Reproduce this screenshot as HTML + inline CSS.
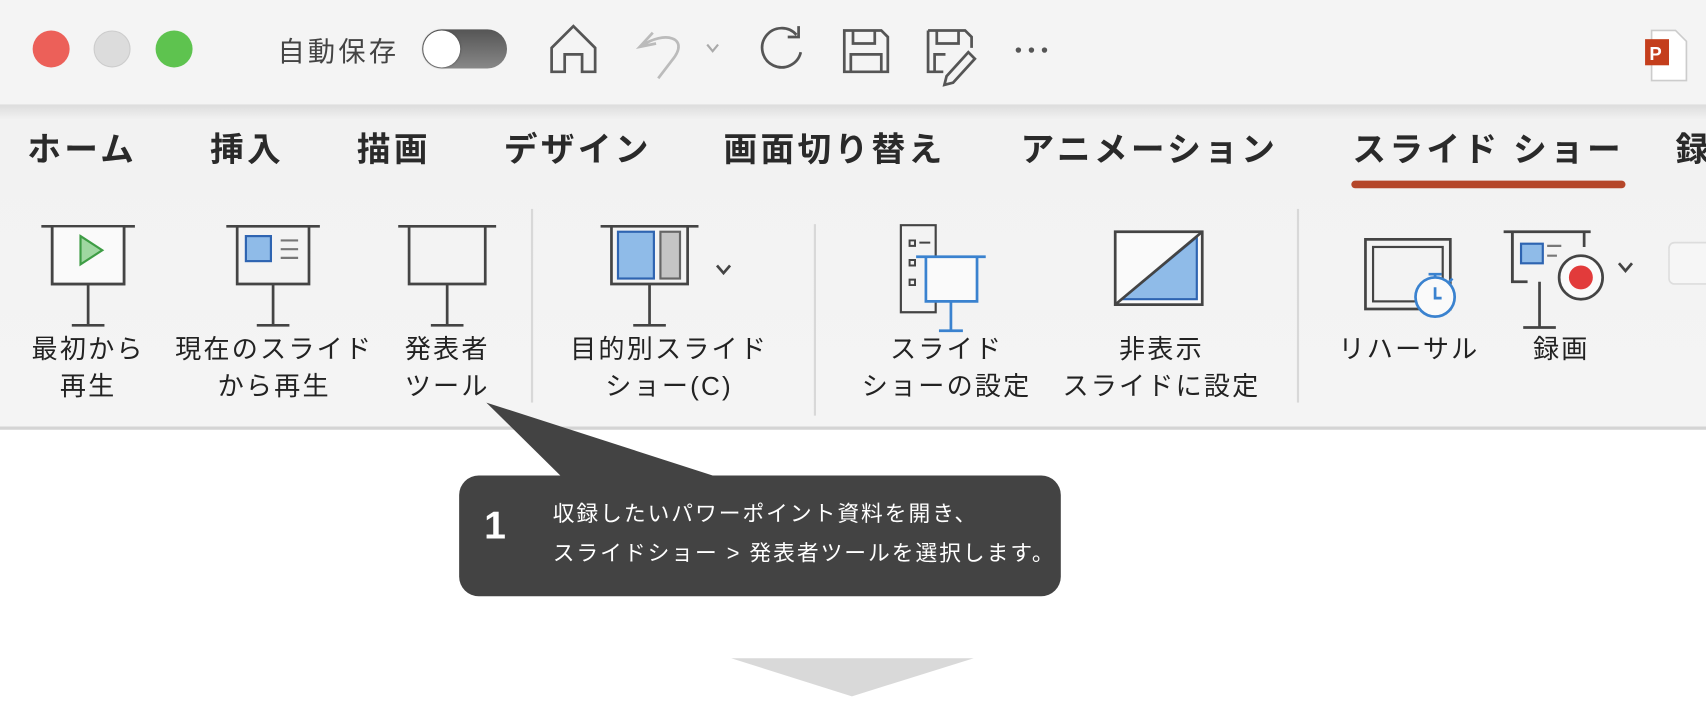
<!DOCTYPE html>
<html><head><meta charset="utf-8"><style>
html,body{margin:0;padding:0;background:#fff;overflow:hidden;width:1706px;height:724px}
#s{position:absolute;left:0;top:0;width:1568px;height:666px;transform:scale(1.08801);transform-origin:0 0;font-family:"Liberation Sans","Noto Sans CJK JP",sans-serif;color:#222}
.a{position:absolute}
.tab{position:absolute;top:112px;font-size:31px;letter-spacing:3px;font-weight:bold;color:#2a2a2a;white-space:nowrap}
.lbl{position:absolute;top:305px;font-size:24px;letter-spacing:2px;line-height:34px;text-align:center;color:#222;white-space:nowrap}
.sep{position:absolute;width:2px;background:#d8d8d8}
</style></head><body><div id="s">
<div class="a" style="left:0;top:0;width:1568px;height:96px;background:#f4f4f4"></div>
<div class="a" style="left:0;top:96px;width:1568px;height:296px;background:linear-gradient(#dcdcdc,#f2f2f2 14px,#f4f4f4)"></div>
<div class="a" style="left:0;top:392px;width:1568px;height:3px;background:#d4d4d4"></div>
<div class="a" style="left:30px;top:28px;width:34px;height:34px;border-radius:50%;background:#ec6059"></div>
<div class="a" style="left:86px;top:28px;width:34px;height:34px;border-radius:50%;background:#dcdcdc;box-sizing:border-box;border:1px solid #ccc"></div>
<div class="a" style="left:143px;top:28px;width:34px;height:34px;border-radius:50%;background:#5ec34f"></div>
<div class="a" style="left:255px;top:28px;font-size:25px;letter-spacing:3px;color:#444">自動保存</div>
<div class="a" style="left:388px;top:27px;width:78px;height:36px;border-radius:18px;background:linear-gradient(#555,#888)"></div>
<div class="a" style="left:389px;top:28px;width:34px;height:34px;border-radius:50%;background:#fff;box-shadow:0 0 2px #444"></div>
<svg class="a" style="left:0;top:0" width="1568" height="96" fill="none" stroke="#555" stroke-width="2.5">
<path d="M507 66V44L527 24L547 44V66H535V50H519V66Z"/>
<path d="M600 30L588 43L603 40M590 42C610 28 635 34 618 55L605 72" stroke="#bbb"/>
<path d="M650 41l5 6l5-6" stroke="#aaa" stroke-width="2"/>
<path d="M732 32A18 18 0 1 0 736 48M734 24v10h-10"/>
<path d="M776 28h34l6 6v32h-40zM784 28v12h20v-12M782 66v-16h28v16"/>
<path d="M853 28h34l6 6v10M853 28v38h14M861 28v12h20v-12M859 66v-16h10M870 70l20-22l6 6l-20 22l-8 2z"/>
<circle cx="936" cy="46" r="2.5" fill="#555" stroke="none"/><circle cx="948" cy="46" r="2.5" fill="#555" stroke="none"/><circle cx="960" cy="46" r="2.5" fill="#555" stroke="none"/>
<path d="M1518 28h22l10 10v36h-32z" fill="#fff" stroke="#ccc" stroke-width="1.5"/>
<rect x="1512" y="36" width="22" height="24" fill="#c43e1c" stroke="none"/>
<text x="1516" y="55" fill="#fff" stroke="none" font-size="17" font-weight="bold" font-family="Liberation Sans">P</text>
</svg>
<div class="tab" style="left:25px">ホーム</div>
<div class="tab" style="left:193px">挿入</div>
<div class="tab" style="left:328px">描画</div>
<div class="tab" style="left:463px">デザイン</div>
<div class="tab" style="left:665px">画面切り替え</div>
<div class="tab" style="left:938px">アニメーション</div>
<div class="tab" style="left:1243px">スライド ショー</div>
<div class="tab" style="left:1540px">録</div>
<div class="a" style="left:1242px;top:166px;width:252px;height:7px;border-radius:4px;background:#b5472a"></div>
<div class="sep" style="left:488px;top:192px;height:178px"></div>
<div class="sep" style="left:748px;top:206px;height:176px"></div>
<div class="sep" style="left:1192px;top:192px;height:178px"></div>
<svg class="a" style="left:0;top:180px" width="1568" height="130" fill="none" stroke="#444" stroke-width="2.5">
<g><path d="M38 28h86M48 28v53h66v-53M81 81v38M66 119h30"/><rect x="48" y="29" width="66" height="52" fill="#fafafa" stroke="none"/><path d="M48 28v53h66v-53"/><path d="M74 37l20 13l-20 13z" fill="#9fd7a1" stroke="#3e9d45" stroke-width="2"/></g>
<g><path d="M208 28h86M218 28v53h66v-53M251 81v38M236 119h30"/><rect x="226" y="37" width="23" height="23" fill="#8fbbe8" stroke="#2e64b1" stroke-width="2"/><path d="M258 41h16M258 49h16M258 57h16" stroke="#777" stroke-width="2"/></g>
<g><path d="M366 28h90M376 28v53h70v-53M411 81v38M396 119h30"/></g>
<g><path d="M552 28h90M562 28v53h70v-53M597 81v38M582 119h30"/><rect x="568" y="33" width="33" height="43" fill="#8fbbe8" stroke="#2e64b1" stroke-width="2"/><rect x="607" y="33" width="18" height="43" fill="#c5c5c5" stroke="#666" stroke-width="2"/><path d="M659 64l6 7l6-7" stroke-width="2.5"/></g>
<g><path d="M828 27h32v80h-32z" stroke-width="2"/><path d="M836 41h5v5h-5zM836 59h5v5h-5zM836 77h5v5h-5zM845 43h10" stroke-width="1.8"/><rect x="849" y="57" width="50" height="40" fill="#fafafa" stroke="none"/><path d="M842 56h64M851 56v41h47v-41M874 97v27M863 124h22" stroke="#3a82cf"/></g>
<g><rect x="1025" y="33" width="80" height="67" fill="#fafafa"/><path d="M1031 95L1100 38V95z" fill="#8fbbe8" stroke="#2e64b1" stroke-width="2"/><path d="M1025 100L1105 33"/></g>
<g><rect x="1255" y="40" width="78" height="64" stroke-width="2.5"/><rect x="1262" y="47" width="64" height="50" stroke-width="2"/><circle cx="1319" cy="93" r="18" fill="#fafafa" stroke="#3a82cf"/><path d="M1319 84v10h6M1313 72h12M1319 72v4M1332 79l3-3" stroke="#3a82cf" stroke-width="2.5"/></g>
<g><path d="M1382 33h80M1390 33v46h14M1415 79v42M1400 121h30"/><path d="M1390 33v46M1456 33v14"/><rect x="1398" y="44" width="20" height="18" fill="#8fbbe8" stroke="#2e64b1" stroke-width="2"/><path d="M1422 46h13M1422 55h9" stroke="#777" stroke-width="2"/><circle cx="1453" cy="75" r="20" fill="#fafafa" stroke="#444" stroke-width="2.5"/><circle cx="1453" cy="75" r="11" fill="#e23b3b" stroke="none"/><path d="M1488 62l6 7l6-7" stroke-width="2.5"/></g>
<rect x="1534" y="43" width="40" height="38" rx="5" stroke="#ddd" stroke-width="1.5" fill="#f6f6f6"/>
<rect x="1534" y="131" width="40" height="38" rx="5" stroke="#bbb" stroke-width="1.5" fill="#fff"/>
<path d="M1541 150l7 10l14-20" stroke="#222" stroke-width="4"/>
</svg>
<div class="lbl" style="left:16px;width:130px">最初から<br>再生</div>
<div class="lbl" style="left:142px;width:220px">現在のスライド<br>から再生</div>
<div class="lbl" style="left:352px;width:118px">発表者<br>ツール</div>
<div class="lbl" style="left:505px;width:220px">目的別スライド<br>ショー(C)</div>
<div class="lbl" style="left:770px;width:200px">スライド<br>ショーの設定</div>
<div class="lbl" style="left:955px;width:225px">非表示<br>スライドに設定</div>
<div class="lbl" style="left:1215px;width:160px">リハーサル</div>
<div class="lbl" style="left:1395px;width:80px">録画</div>
<svg class="a" style="left:0;top:0" width="1568" height="666">
<path d="M447 370L515 437H655Z" fill="#434343"/>
<rect x="422" y="437" width="553" height="111" rx="18" fill="#434343"/>
<path d="M672 605H895L783 640Z" fill="#d9d9d9"/>
</svg>
<div class="a" style="left:445px;top:462px;font-size:36px;font-weight:bold;color:#fff">1</div>
<div class="a" style="left:508px;top:455px;font-size:20px;letter-spacing:1.8px;line-height:36px;color:#fff;white-space:nowrap">収録したいパワーポイント資料を開き、<br>スライドショー &gt; 発表者ツールを選択します。</div>
</div></body></html>
